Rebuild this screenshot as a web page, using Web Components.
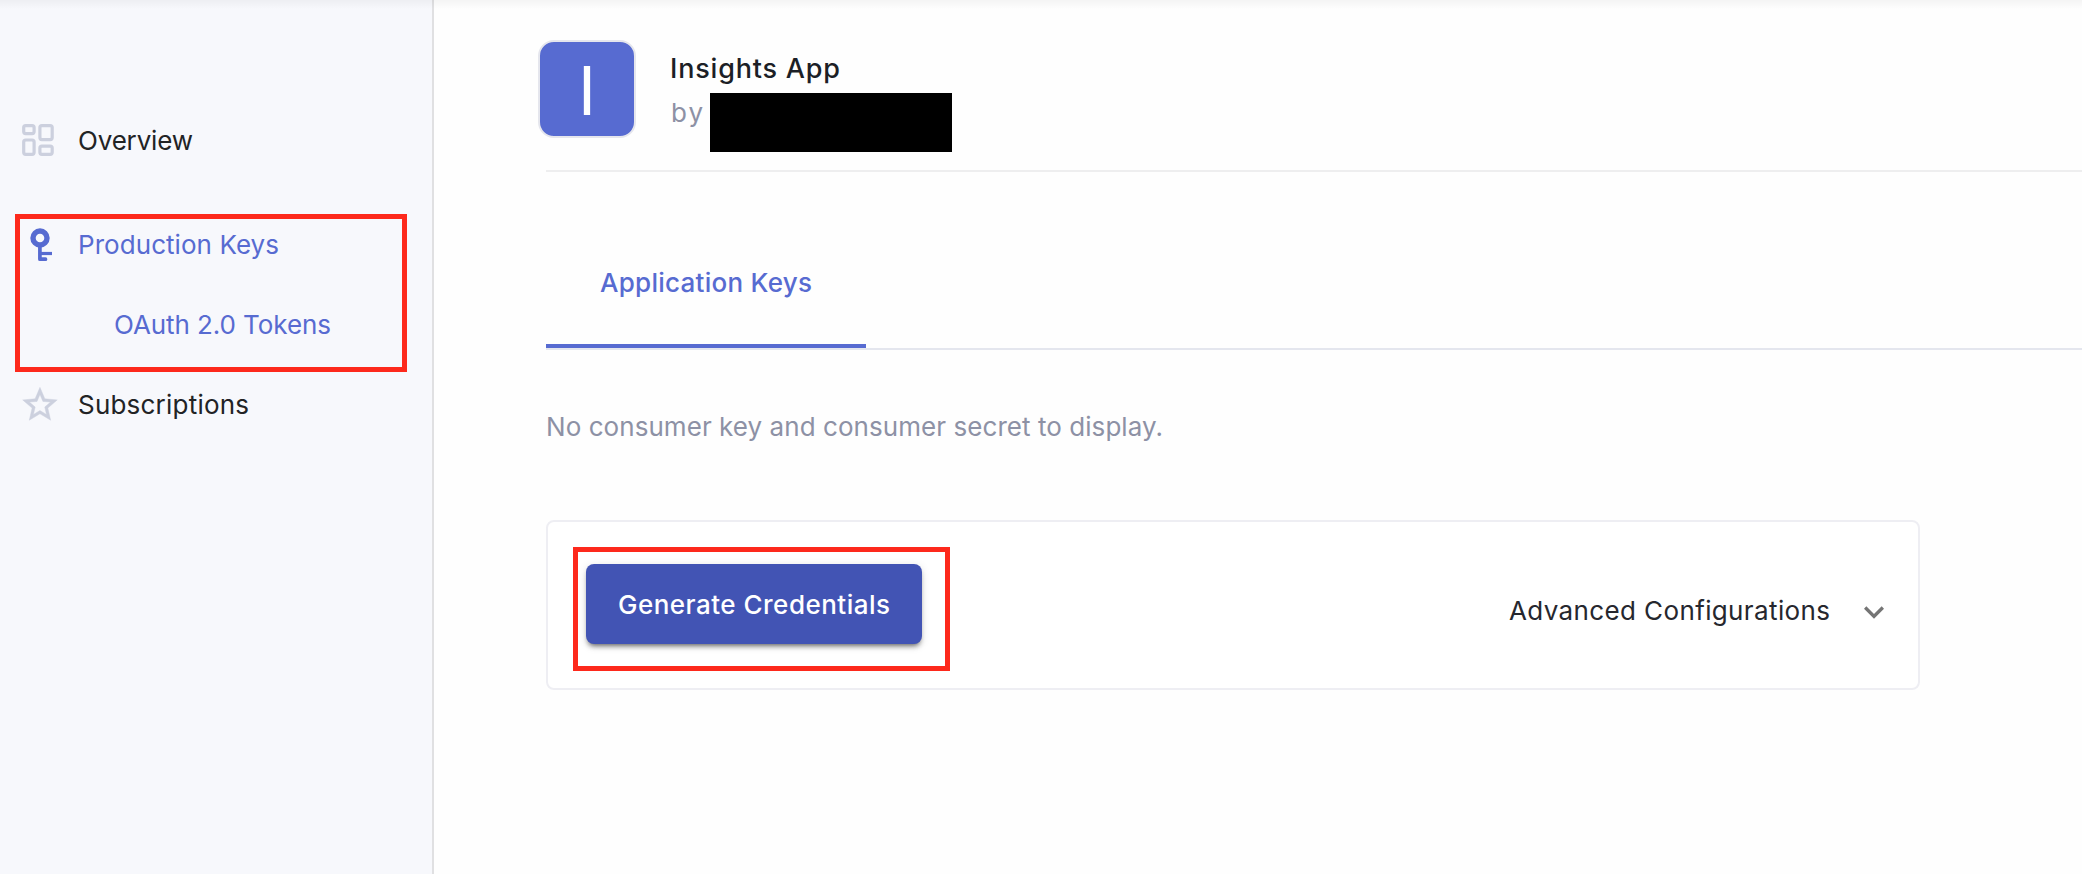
<!DOCTYPE html>
<html lang="en">
<head>
<meta charset="utf-8">
<title>Insights App</title>
<style>
html, body { margin: 0; height: 100%; }
body { font-family: Inter, "Open Sans", sans-serif; font-size: 26px; background: #fefefe; overflow: hidden; }
</style>
</head>
<body>
<keys-page></keys-page>
<script>
const define = (name, html, init) => {
  const template = document.createElement('template');
  template.innerHTML = html;
  customElements.define(name, class extends HTMLElement {
    constructor() {
      super();
      this.attachShadow({ mode: 'open' }).append(template.content.cloneNode(true));
    }
    connectedCallback() { if (init) init(this); }
  });
};

/* One line of text whose tracking is set so that it fills the given measure. */
define('fit-text', `
<style>
:host { display: block; white-space: nowrap; line-height: 40px; flex: none; }
span { display: inline-block; }
</style><span><slot></slot></span>`, el => {
  const span = el.shadowRoot.querySelector('span');
  const measure = Number(el.getAttribute('measure'));
  const count = el.textContent.length;
  const natural = span.getBoundingClientRect().width;
  span.style.letterSpacing = ((measure - natural) / (count - 1)).toFixed(3) + 'px';
  el.style.width = measure + 'px';
});

define('nav-item', `
<style>
:host { display: flex; align-items: center; height: 80px; color: #222325; font-weight: 400; }
:host([active]) { color: #576bd1; }
:host([nested]) .icon { width: 114px; }
.icon { width: 78px; height: 80px; flex: none; color: #ccd0de; }
:host([active]) .icon { color: #576bd1; }
.label { padding-top: 2px; }
</style>
<div class="icon"><slot name="icon"></slot></div><div class="label"><slot></slot></div>`);

define('app-sidebar', `
<style>
:host { display: flex; flex-direction: column; box-sizing: border-box; width: 434px; flex: none; padding-top: 100px; background: #f7f8fc; border-right: 2px solid #e0e0e2; }
.first { margin-bottom: 24px; }
svg { display: block; }
</style>
<nav-item class="first">
  <svg slot="icon" width="77" height="80" viewBox="0 100 77 80" fill="none" stroke="currentColor" stroke-width="3.2">
    <rect x="23.7" y="125.6" width="10.4" height="8" rx="2"/>
    <rect x="39.9" y="125.6" width="12.3" height="14" rx="2"/>
    <rect x="23.7" y="140" width="10.4" height="14.3" rx="2"/>
    <rect x="39.9" y="146.1" width="12.3" height="8.2" rx="2"/>
  </svg>
  <fit-text measure="115">Overview</fit-text>
</nav-item>
<nav-item active>
  <svg slot="icon" width="77" height="80" viewBox="0 204 77 80" fill="none" stroke="currentColor">
    <circle cx="40" cy="238" r="7" stroke-width="5.4"/>
    <path d="M39.9 246V259.2H45.5" stroke-width="3.7" stroke-linejoin="round" stroke-linecap="round"/>
    <path d="M40 253.5H52" stroke-width="3.2"/>
  </svg>
  <fit-text measure="201">Production Keys</fit-text>
</nav-item>
<nav-item active nested><fit-text measure="217">OAuth 2.0 Tokens</fit-text></nav-item>
<nav-item>
  <svg slot="icon" width="77" height="80" viewBox="0 364 77 80" fill="currentColor">
    <path transform="translate(19.2 383.9) scale(1.73)" stroke="currentColor" stroke-width=".25" d="M22 9.24l-7.19-.62L12 2 9.19 8.63 2 9.24l5.46 4.73L5.82 21 12 17.27 18.18 21l-1.63-7.03L22 9.24zM12 15.4l-3.76 2.27 1-4.28-3.32-2.88 4.38-.38L12 6.1l1.71 4.04 4.38.38-3.32 2.88 1 4.28L12 15.4z"/>
  </svg>
  <fit-text measure="171">Subscriptions</fit-text>
</nav-item>`);

define('app-header', `
<style>
:host { display: flex; box-sizing: border-box; height: 172px; padding-top: 40px; border-bottom: 2px solid #eeeeef; }
.avatar { box-sizing: border-box; width: 98px; height: 98px; margin-left: -8px; border: 2px solid #e5e6ed; border-radius: 16px; background: #576bd1; color: #fff; font-size: 67px; font-weight: 400; line-height: 97px; text-align: center; flex: none; }
.info { margin-left: 34px; padding-top: 9px; }
.title { font-size: 27px; font-weight: 500; color: #1c1f26; }
.owner { display: flex; margin-top: 4px; color: #8d91a5; font-weight: 400; }
.mask { width: 242px; height: 59px; margin-left: 7px; background: #000; }
.by { margin-left: 1px; }
</style>
<div class="avatar">I</div>
<div class="info">
  <fit-text class="title" measure="170">Insights App</fit-text>
  <div class="owner"><fit-text class="by" measure="32">by</fit-text><div class="mask"></div></div>
</div>`);

define('tab-bar', `
<style>
:host { display: flex; box-sizing: border-box; height: 178px; padding-top: 44px; border-bottom: 2px solid #e4e6ee; }
.tab { box-sizing: border-box; display: flex; align-items: center; justify-content: center; width: 320px; height: 132px; padding-top: 6px; border-bottom: 4px solid #576bd1; color: #576bd1; font-weight: 500; }
</style>
<div class="tab"><slot></slot></div>`);

define('primary-button', `
<style>
:host { display: block; }
button { display: flex; align-items: center; justify-content: center; width: 336px; height: 80px; padding: 2px 0 0; border: 0; border-radius: 8px; background: #4254b4; color: #fff; font: inherit; font-weight: 500; box-shadow: 0 2px 10px rgba(0,0,0,.12), 0 4px 4px rgba(0,0,0,.14), 0 4px 4px -3px rgba(0,0,0,.5); }
</style>
<button><slot></slot></button>`);

define('config-card', `
<style>
:host { display: flex; align-items: flex-start; justify-content: space-between; box-sizing: border-box; width: 1374px; height: 170px; padding: 42px 24px 0 38px; border: 2px solid #eeeef3; border-radius: 8px; background: #fff; }
.advanced { display: flex; align-items: center; height: 94px; color: #26272e; font-weight: 400; }
svg { margin-left: 24px; margin-top: 2px; display: block; }
</style>
<primary-button><fit-text measure="272">Generate Credentials</fit-text></primary-button>
<div class="advanced">
  <fit-text measure="321">Advanced Configurations</fit-text>
  <svg width="40" height="40" viewBox="0 0 24 24" fill="#757575"><path d="M16.59 8.59L12 13.17 7.41 8.59 6 10l6 6 6-6z"/></svg>
</div>`);

define('highlight-frame', `
<style>:host { position: absolute; box-sizing: border-box; border: 5px solid #fd291c; pointer-events: none; }</style>`);

define('keys-page', `
<style>
:host { display: flex; position: relative; width: 2082px; height: 874px; overflow: hidden; }
.shade { position: absolute; inset: 0 0 auto 0; height: 9px; background: linear-gradient(rgba(0,0,0,.04), rgba(0,0,0,0)); }
main { flex: 1; padding-left: 112px; min-width: 0; }
.empty { box-sizing: border-box; height: 170px; padding-bottom: 16px; display: flex; align-items: center; color: #8d91a5; font-weight: 400; }
.keys { left: 15px; top: 214px; width: 392px; height: 158px; }
.generate { left: 573px; top: 547px; width: 377px; height: 124px; }
</style>
<app-sidebar></app-sidebar>
<main>
  <app-header></app-header>
  <tab-bar><fit-text measure="212">Application Keys</fit-text></tab-bar>
  <div class="empty"><fit-text measure="617">No consumer key and consumer secret to display.</fit-text></div>
  <config-card></config-card>
</main>
<div class="shade"></div>
<highlight-frame class="keys"></highlight-frame>
<highlight-frame class="generate"></highlight-frame>`);
</script>
</body>
</html>
